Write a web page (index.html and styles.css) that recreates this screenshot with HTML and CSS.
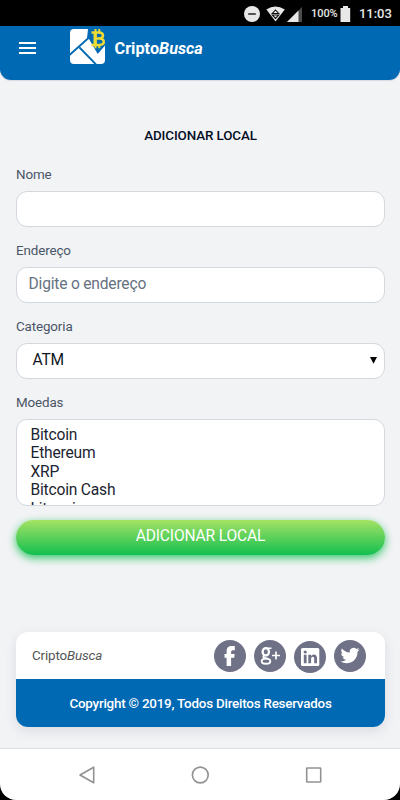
FILE: index.html
```html
<!DOCTYPE html>
<html lang="pt-BR">
<head>
<meta charset="utf-8">
<meta name="viewport" content="width=device-width, initial-scale=1">
<title>CriptoBusca</title>
<link rel="stylesheet" href="styles.css">
</head>
<body>
<div class="phone">
  <div class="status">
    <svg class="status-icons" width="112" height="26" viewBox="0 0 112 26">
      <circle cx="8" cy="13" r="8" fill="#e8e8e8"/>
      <path d="M4.200 13h7.600" stroke="#222" stroke-width="1.500"/>
      <path d="M22.400 8.500Q31.300 2.500 40.800 8.500L31.500 20.600Z" fill="#e8e8e8"/>
      <path d="M31.500 9l3.200 3.500h-6.400zM28.300 14h6.400l-3.200 3.400z" fill="none" stroke="#111" stroke-width="1.100"/>
      <path d="M43 21L58 6v15z" fill="#4b4b4b"/>
      <path d="M43 21L54.500 9.500V21z" fill="#e8e8e8"/>
      <path d="M96.500 7h2.500V5h5v2h2.200v14h-9.700z" fill="#e8e8e8"/>
    </svg>
    <span class="percent">100%</span>
    <span class="clock">11:03</span>
  </div>
  <header class="header">
    <svg class="menu" width="17" height="12" viewBox="0 0 17 12"><path d="M0 1h17M0 6h17M0 11h17" stroke="#fff" stroke-width="1.900"/></svg>
    <svg class="logo" width="36" height="36" viewBox="0 0 36 36">
      <path d="M4 0H18L17 9.500h1.700L27.700 25 35 16.500V31q0 4-4 4H4q-4 0-4-4V4Q0 0 4 0z" fill="#fff"/>
      <path d="M-.5 26L18.500 9M9.500 18.500L26 35.500" fill="none" stroke="#0069b4" stroke-width="1.800"/>
      <g fill="none" stroke="#eedb35">
        <path d="M25.500 0v4M29.300 0v4M25.500 15v4.300M29.300 15v4.300" stroke-width="2"/>
        <path d="M21.500 3.500h7.500q4 .2 4 3t-4 2.900h-4M25 9.400h4.500q4.300.2 4.300 3.300t-4.300 3.200h-8" stroke-width="2.500"/>
        <path d="M25.200 3.500v12.400" stroke-width="3.400"/>
      </g>
    </svg>
    <span class="brand">Cripto<i>Busca</i></span>
  </header>
  <main class="main">
    <h1 class="title">ADICIONAR LOCAL</h1>
    <form class="form">
      <label class="label" for="nome">Nome</label>
      <input class="field" id="nome" type="text">
      <label class="label" for="endereco">Endereço</label>
      <input class="field" id="endereco" type="text" placeholder="Digite o endereço">
      <label class="label" for="categoria">Categoria</label>
      <div class="field select" id="categoria"><span>ATM</span><svg width="7" height="7" viewBox="0 0 7 7"><path d="M0 0h7L3.500 6.800z"/></svg></div>
      <label class="label">Moedas</label>
      <div class="list"><div>Bitcoin</div><div>Ethereum</div><div>XRP</div><div>Bitcoin Cash</div><div>Litecoin</div></div>
      <button class="submit" type="button">ADICIONAR LOCAL</button>
    </form>
    <footer class="card">
      <div class="card-top">
        <span class="card-brand">Cripto<i>Busca</i></span>
        <div class="social">
          <svg width="32" height="32" viewBox="0 0 32 32"><circle cx="16" cy="16" r="16" fill="#6f7287"/><path d="M20.800 6v4.200h-2q-1.700 0-1.700 1.700v2h3.600l-.5 3.800h-3.100V26h-4.500v-8.300H10.500v-3.800h2.100v-3q0-4.900 5-4.900z" fill="#fff"/></svg>
          <svg width="32" height="32" viewBox="0 0 32 32"><circle cx="16" cy="16" r="16" fill="#6f7287"/><g fill="none" stroke="#fff"><ellipse cx="11.800" cy="11.800" rx="3.200" ry="3.700" stroke-width="2.300"/><path d="M13 8.300h4.500" stroke-width="1.400"/><path d="M10.500 15.300q-2.300 1.500-.2 2.500l3.200.9" stroke-width="1.900"/><ellipse cx="12" cy="21.200" rx="4.300" ry="2.600" stroke-width="1.900"/><path d="M18 15.500h8M22 11.500v8" stroke-width="1.700"/></g></svg>
          <svg class="linkedin" width="32" height="32" viewBox="0 0 32 32"><circle cx="16" cy="16" r="16" fill="#6f7287"/><rect x="7" y="7" width="18.300" height="18" rx="1.500" fill="#fff"/><g fill="#6f7287"><circle cx="11.200" cy="11" r="1.600"/><path d="M9.800 13.700h2.800v8.600H9.800zM14.300 13.700H17V15q.9-1.500 2.800-1.500 3.200 0 3.200 4v4.800h-2.800v-4.500q0-2-1.500-2-1.600 0-1.600 2v4.500h-2.800z"/></g></svg>
          <svg width="32" height="32" viewBox="0 0 32 32"><circle cx="16" cy="16" r="16" fill="#6f7287"/><path transform="translate(6.500 6) scale(.79)" d="M23.950 4.570a10 10 0 0 1-2.820.77 4.960 4.960 0 0 0 2.160-2.720c-.95.550-2 .95-3.130 1.180a4.920 4.920 0 0 0-8.380 4.480C7.690 8.100 4.070 6.130 1.640 3.160a4.820 4.820 0 0 0-.67 2.480c0 1.710.87 3.210 2.190 4.100a4.900 4.900 0 0 1-2.230-.62v.06a4.920 4.920 0 0 0 3.950 4.830 5 5 0 0 1-2.210.08 4.940 4.940 0 0 0 4.600 3.420A9.870 9.870 0 0 1 0 19.540a14 14 0 0 0 7.550 2.210c9.050 0 14-7.500 14-13.980 0-.210 0-.420-.02-.630a9.900 9.900 0 0 0 2.460-2.550z" fill="#fff"/></svg>
        </div>
      </div>
      <div class="card-bottom">Copyright © 2019, Todos Direitos Reservados</div>
    </footer>
  </main>
  <nav class="nav">
    <svg width="18" height="20" viewBox="0 0 18 20"><path d="M15.700 2.200v15.600L2 10z" fill="none" stroke="#929292" stroke-width="1.600" stroke-linejoin="round"/></svg>
    <svg width="18" height="20" viewBox="0 0 18 20"><circle cx="9.300" cy="10" r="7.900" fill="none" stroke="#929292" stroke-width="1.600"/></svg>
    <svg width="18" height="20" viewBox="0 0 18 20"><rect x="2.700" y="3" width="14" height="14" rx=".5" fill="none" stroke="#929292" stroke-width="1.600"/></svg>
  </nav>
</div>
</body>
</html>
```
FILE: styles.css
```css
* { box-sizing: border-box; }
body { margin: 0; background: #000; font-family: Roboto, sans-serif; }
.phone { width: 400px; height: 800px; overflow: hidden; display: flex; flex-direction: column; background: #f2f3f5; }
.status { height: 26px; flex: none; background: #000; color: #e8e8e8; display: grid; grid-template-columns: 244px 67px 47px 1fr; align-items: center; }
.status-icons { grid-column: 2 / 4; grid-row: 1; }
.percent { grid-column: 3; grid-row: 1; font-size: 11px; font-weight: 500; line-height: 26px; padding: 1px 0 0; letter-spacing: -.05px; }
.clock { grid-column: 4; grid-row: 1; font-size: 13px; font-weight: 500; line-height: 26px; padding: 1px 0 0 1px; letter-spacing: -.05px; }
.header { height: 54px; flex: none; background: #0069b4; border-radius: 0 0 11px 11px; display: flex; align-items: flex-start; padding: 3px 0 0 19px; box-shadow: 0 1px 1px rgba(0, 40, 90, .12); }
.menu { margin: 13px 34px 0 0; }
.brand { margin: 10px 0 0 8.500px; color: #fff; font-size: 16.300px; line-height: 20px; font-weight: 700; letter-spacing: 0; }
.main { flex: 1; padding: 48px 15px 0 16px; display: flex; flex-direction: column; }
.title { margin: 0; text-align: center; font-size: 13.400px; line-height: 16px; font-weight: 500; letter-spacing: -.12px; color: #040d24; }
.form { display: flex; flex-direction: column; margin-top: 22px; }
.label { height: 24.500px; font-size: 13.400px; line-height: 17px; letter-spacing: -.13px; color: #4a5568; }
.field { display: block; width: 100%; height: 36px; margin: 0 0 15.500px; padding: 0 11.500px 2px; border: 1px solid #d3d8df; border-radius: 11px; background: #fff; font: 400 15.600px Roboto, sans-serif; letter-spacing: -.2px; color: #111827; }
.field::placeholder { color: #667180; opacity: 1; }
.field.select { display: flex; align-items: center; justify-content: space-between; padding: 0 7px 1px 15.500px; }
.list { height: 87px; overflow: hidden; padding: 6.500px 13.500px; border: 1px solid #d3d8df; border-radius: 11px; background: #fff; color: #1b2430; font-size: 15.600px; line-height: 18.400px; letter-spacing: -.2px; }
.submit { height: 35px; margin: 14px 0 0; padding: 0 0 3px; border: 0; border-radius: 18px; background: linear-gradient(#a4e264, #12bf50); box-shadow: 0 3px 9px rgba(18, 191, 80, .85); color: #fff; font: 400 15.600px Roboto, sans-serif; letter-spacing: -.16px; }
.card { margin-top: 77px; height: 95px; border-radius: 12px; overflow: hidden; background: #fff; box-shadow: 0 4px 12px rgba(40, 55, 80, .12); display: flex; flex-direction: column; }
.card-top { height: 47.500px; display: flex; align-items: center; justify-content: space-between; padding: 0 19px 0 16px; }
.card-brand { font-size: 13.400px; color: #555; letter-spacing: -.15px; }
.social { display: flex; gap: 8px; margin-top: 1px; }
.linkedin { position: relative; top: 1px; }
.card-bottom { flex: 1; background: #0069b4; color: #fff; font-size: 13.400px; font-weight: 500; letter-spacing: -.22px; display: flex; align-items: center; justify-content: center; padding-top: 1px; }
.nav { height: 52px; flex: none; margin-top: auto; border-top: 1px solid #dedfe1; border-radius: 0 0 16px 16px; background: #fff; box-shadow: 0 20px 0 20px #000; display: flex; align-items: center; justify-content: space-between; padding: 1px 78px; }
```
